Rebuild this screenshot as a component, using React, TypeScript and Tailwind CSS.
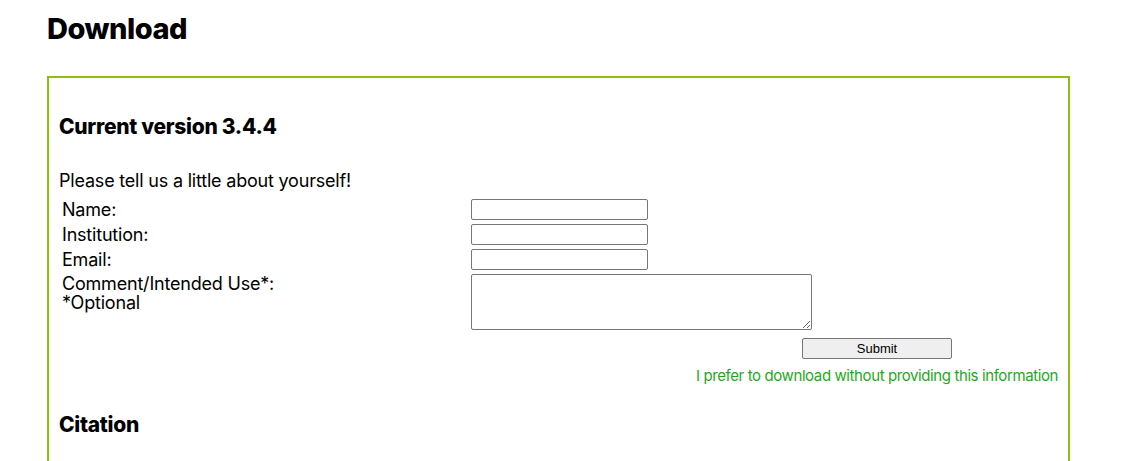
import React from "react";

const font = { fontFamily: '"Inter", "Liberation Sans", sans-serif' };

export default function App() {
  const rows: { label: React.ReactNode; field: React.ReactNode }[] = [
    { label: "Name:", field: <input className="h-[21px] w-[177px] rounded-[2px] border border-[#767676] bg-white" /> },
    { label: "Institution:", field: <input className="h-[21px] w-[177px] rounded-[2px] border border-[#767676] bg-white" /> },
    { label: "Email:", field: <input className="h-[21px] w-[177px] rounded-[2px] border border-[#767676] bg-white" /> },
  ];
  return (
    <div className="min-h-[461px] w-[1123px] overflow-hidden bg-white text-black" style={font}>
      <div className="pl-[47px] pr-[53px]">
        <h1 className="pt-[12px] text-[29px] font-extrabold leading-[34px] tracking-[-0.5px]">Download</h1>
        <div className="mt-[30px] border-2 border-b-0 border-[#8fbf0a] pl-[10px] pr-[10px] pt-[36px] pb-[30px]">
          <h2 className="text-[21px] font-extrabold leading-[26px] tracking-[-0.3px]">Current version 3.4.4</h2>
          <p className="mt-[30px] text-[18px] leading-[22px] tracking-[-0.2px]">Please tell us a little about yourself!</p>
          <div className="mt-[7px] grid grid-cols-[412px_1fr] gap-y-[4px] text-[18px] leading-[20px] tracking-[-0.2px]">
            {rows.map((r, i) => (
              <React.Fragment key={i}>
                <div className="pl-[3px] pt-[1px]">{r.label}</div>
                <div className="flex">{r.field}</div>
              </React.Fragment>
            ))}
            <div className="pl-[3px] pt-[0px] leading-[19px]">
              Comment/Intended Use*:
              <br />
              *Optional
            </div>
            <div className="flex">
              <textarea className="h-[56px] w-[341px] resize rounded-[2px] border border-[#767676] bg-white" />
            </div>
          </div>
          <div className="mt-[8px] flex">
            <button
              className="ml-[743px] h-[21px] w-[150px] rounded-[2px] border border-[#767676] bg-[#efefef] text-[13px] leading-[19px]"
              style={{ fontFamily: '"Liberation Sans", Arial, sans-serif' }}
            >
              Submit
            </button>
          </div>
          <div className="mt-[7px] flex justify-end">
            <a className="text-[15px] leading-[20px] tracking-[-0.4px] text-[#1ea81e]">I prefer to download without providing this information</a>
          </div>
          <h2 className="mt-[26px] text-[21px] font-extrabold leading-[26px] tracking-[-0.3px]">Citation</h2>
        </div>
      </div>
    </div>
  );
}
